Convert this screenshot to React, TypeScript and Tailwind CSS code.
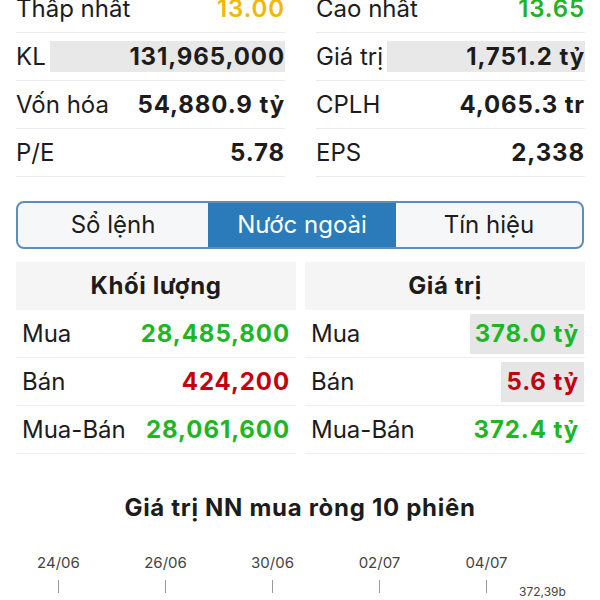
const font = { fontFamily: "Inter, 'Noto Sans', sans-serif" };

const stats = [
  [
    { label: "Thấp nhất", value: "13.00", color: "text-[#f2b705]", weight: "font-semibold" },
    { label: "Cao nhất", value: "13.65", color: "text-[#22b322]", weight: "font-semibold" },
  ],
  [
    { label: "KL", value: "131,965,000", color: "text-[#1c1c1c]", weight: "font-bold", shade: true },
    { label: "Giá trị", value: "1,751.2 tỷ", color: "text-[#1c1c1c]", weight: "font-bold", shade: true },
  ],
  [
    { label: "Vốn hóa", value: "54,880.9 tỷ", color: "text-[#1c1c1c]", weight: "font-bold" },
    { label: "CPLH", value: "4,065.3 tr", color: "text-[#1c1c1c]", weight: "font-bold" },
  ],
  [
    { label: "P/E", value: "5.78", color: "text-[#1c1c1c]", weight: "font-bold" },
    { label: "EPS", value: "2,338", color: "text-[#1c1c1c]", weight: "font-bold" },
  ],
];

const volume = [
  { label: "Mua", value: "28,485,800", color: "text-[#1fb625]" },
  { label: "Bán", value: "424,200", color: "text-[#c4000c]" },
  { label: "Mua-Bán", value: "28,061,600", color: "text-[#1fb625]" },
];

const money = [
  { label: "Mua", value: "378.0 tỷ", color: "text-[#1fb625]", shade: true },
  { label: "Bán", value: "5.6 tỷ", color: "text-[#c4000c]", shade: true },
  { label: "Mua-Bán", value: "372.4 tỷ", color: "text-[#1fb625]" },
];

const dates = ["24/06", "26/06", "30/06", "02/07", "04/07"];

function StatCell({ label, value, color, weight, shade }: { label: string; value: string; color: string; weight: string; shade?: boolean }) {
  return (
    <div className="flex h-[48px] items-center border-b border-[#ececec]">
      <span className="pr-1 text-[24px] text-[#1c1c1c]">{label}</span>
      <div className={`flex h-[31px] flex-1 items-center justify-end ${shade ? "bg-[#e8e8e8]" : ""}`}>
        <span className={`text-[24px] tracking-[0.9px] ${weight} ${color}`}>{value}</span>
      </div>
    </div>
  );
}

function FlowPanel({ title, rows }: { title: string; rows: { label: string; value: string; color: string; shade?: boolean }[] }) {
  return (
    <div className="flex flex-col">
      <div className="flex h-[48px] items-center justify-center bg-[#f5f5f5] text-[24px] font-bold tracking-[0.6px] text-[#1c1c1c]">
        {title}
      </div>
      {rows.map((r) => (
        <div key={r.label} className="flex h-[48px] items-center justify-between border-b border-[#efefef] pl-[6px] pr-[1px]">
          <span className="text-[24px] text-[#1c1c1c]">{r.label}</span>
          <span
            className={`flex h-[40px] items-center px-[5px] text-[24px] font-bold tracking-[0.9px] ${r.color} ${r.shade ? "bg-[#e6e6e6]" : ""}`}
          >
            {r.value}
          </span>
        </div>
      ))}
    </div>
  );
}

export default function App() {
  return (
    <div className="h-[600px] w-[600px] overflow-hidden bg-white" style={font}>
      {/* Price summary */}
      <div className="-mt-[15px] grid grid-cols-[269px_269px] gap-x-[31px] px-[16px]">
        {stats.map((pair, i) => (
          <div key={i} className="contents">
            <StatCell {...pair[0]} />
            <StatCell {...pair[1]} />
          </div>
        ))}
      </div>

      {/* Tabs */}
      <div className="mx-[16px] mt-[24px] grid h-[48px] w-[568px] grid-cols-[190px_188px_1fr] overflow-hidden rounded-[8px] border-2 border-[#5a8fbd] bg-[#f6f7f9]">
        <div className="flex items-center justify-center text-[24px] text-[#1c1c1c]">Sổ lệnh</div>
        <div className="flex items-center justify-center bg-[#2b7bba] text-[24px] text-white">Nước ngoài</div>
        <div className="flex items-center justify-center text-[24px] text-[#1c1c1c]">Tín hiệu</div>
      </div>

      {/* Foreign trading */}
      <div className="mt-[13px] grid grid-cols-[280px_280px] gap-x-[9px] px-[16px]">
        <FlowPanel title="Khối lượng" rows={volume} />
        <FlowPanel title="Giá trị" rows={money} />
      </div>

      {/* Chart */}
      <div className="mt-[36px] text-center text-[24px] font-bold tracking-[0.7px] text-[#1c1c1c]">Giá trị NN mua ròng 10 phiên</div>
      <div className="relative mt-[26px] flex pl-[5px]">
        {dates.map((d) => (
          <div key={d} className="flex w-[107px] flex-col items-center">
            <span className="text-[15px] text-[#444]">{d}</span>
            <span className="mt-[5px] h-[13px] w-px bg-[#999]" />
          </div>
        ))}
        <span className="absolute left-[519px] top-[33px] text-[12px] leading-[14px] text-[#444]">372,39b</span>
      </div>
    </div>
  );
}
